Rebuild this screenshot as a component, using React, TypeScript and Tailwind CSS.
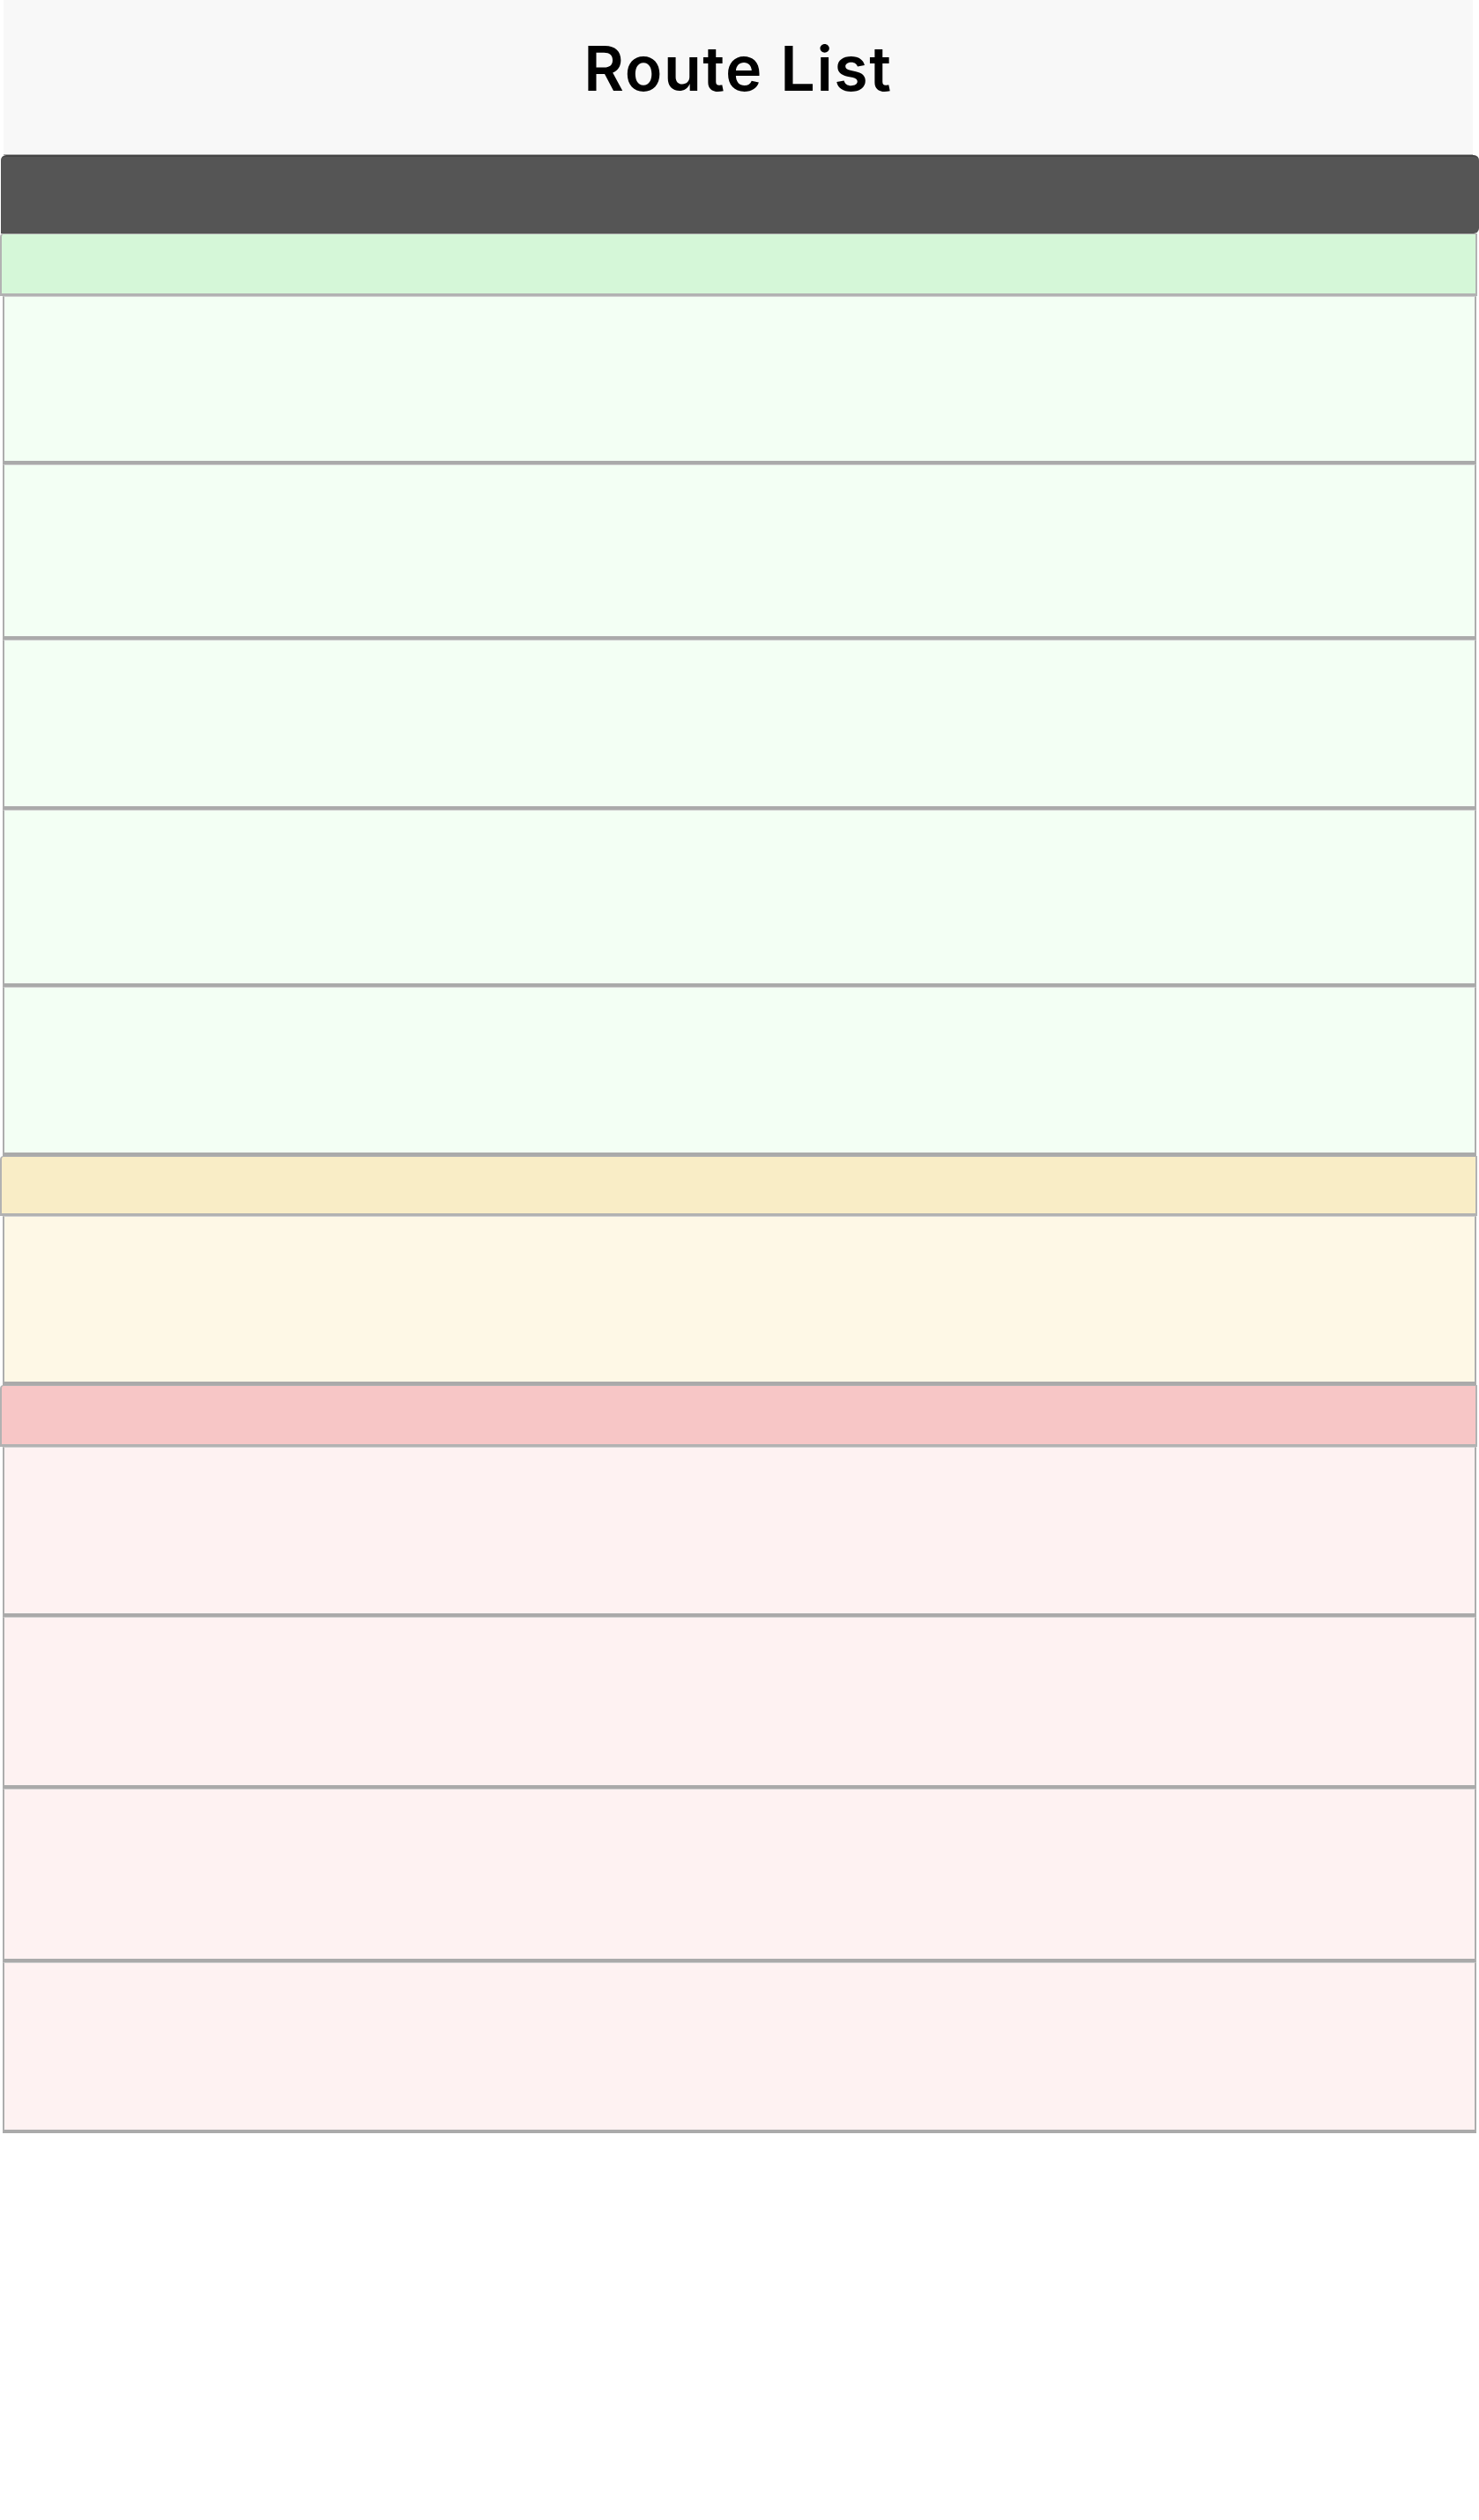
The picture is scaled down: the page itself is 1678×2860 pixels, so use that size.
type Section = {
  key: string;
  headerBg: string;
  rowBg: string;
  headerH: string;
  rows: string[];
};

const sections: Section[] = [
  {
    key: "green",
    headerBg: "bg-[#d5f7d8]",
    rowBg: "bg-[#f3fff4]",
    headerH: "h-[71px]",
    rows: ["h-[191px]", "h-[199px]", "h-[193px]", "h-[201px]", "h-[192px]"],
  },
  {
    key: "yellow",
    headerBg: "bg-[#f9edc6]",
    rowBg: "bg-[#fef8e6]",
    headerH: "h-[68px]",
    rows: ["h-[192px]"],
  },
  {
    key: "red",
    headerBg: "bg-[#f7c6c6]",
    rowBg: "bg-[#fef2f2]",
    headerH: "h-[70px]",
    rows: ["h-[193px]", "h-[195px]", "h-[197px]", "h-[194px]"],
  },
];

function RouteSection({ s }: { s: Section }) {
  return (
    <div className="flex flex-col">
      <div
        className={`${s.headerH} ${s.headerBg} mr-[2px] rounded-tl-[4px] border-x-2 border-t border-b-[3px] border-[#b2b2b2]`}
      />
      {s.rows.map((h, i) => (
        <div
          key={`${s.key}-${i}`}
          className={`${h} ${s.rowBg} ml-[3px] mr-[3px] border-x-2 border-t border-b-[4px] border-x-[#adadad] border-t-[#cfcfcf] border-b-[#aaaaaa]`}
        />
      ))}
    </div>
  );
}

export default function App() {
  return (
    <div
      className="min-h-[2860px] w-[1678px] bg-white"
      style={{ fontFamily: "Inter, Roboto, sans-serif" }}
    >
      <header className="ml-[4px] mr-[7px] h-[176px] border-b border-[#a8a8a8] bg-[#f8f8f8] pt-[43px] text-center">
        <h1 className="text-[70px] font-semibold leading-none tracking-[1.6px] text-black">
          Route List
        </h1>
      </header>
      <div className="ml-[1px] h-[89px] rounded-tl-[6px] rounded-tr-[6px] rounded-br-[6px] border-t-2 border-[#444444] bg-[#555555]" />
      {sections.map((s) => (
        <RouteSection key={s.key} s={s} />
      ))}
    </div>
  );
}
